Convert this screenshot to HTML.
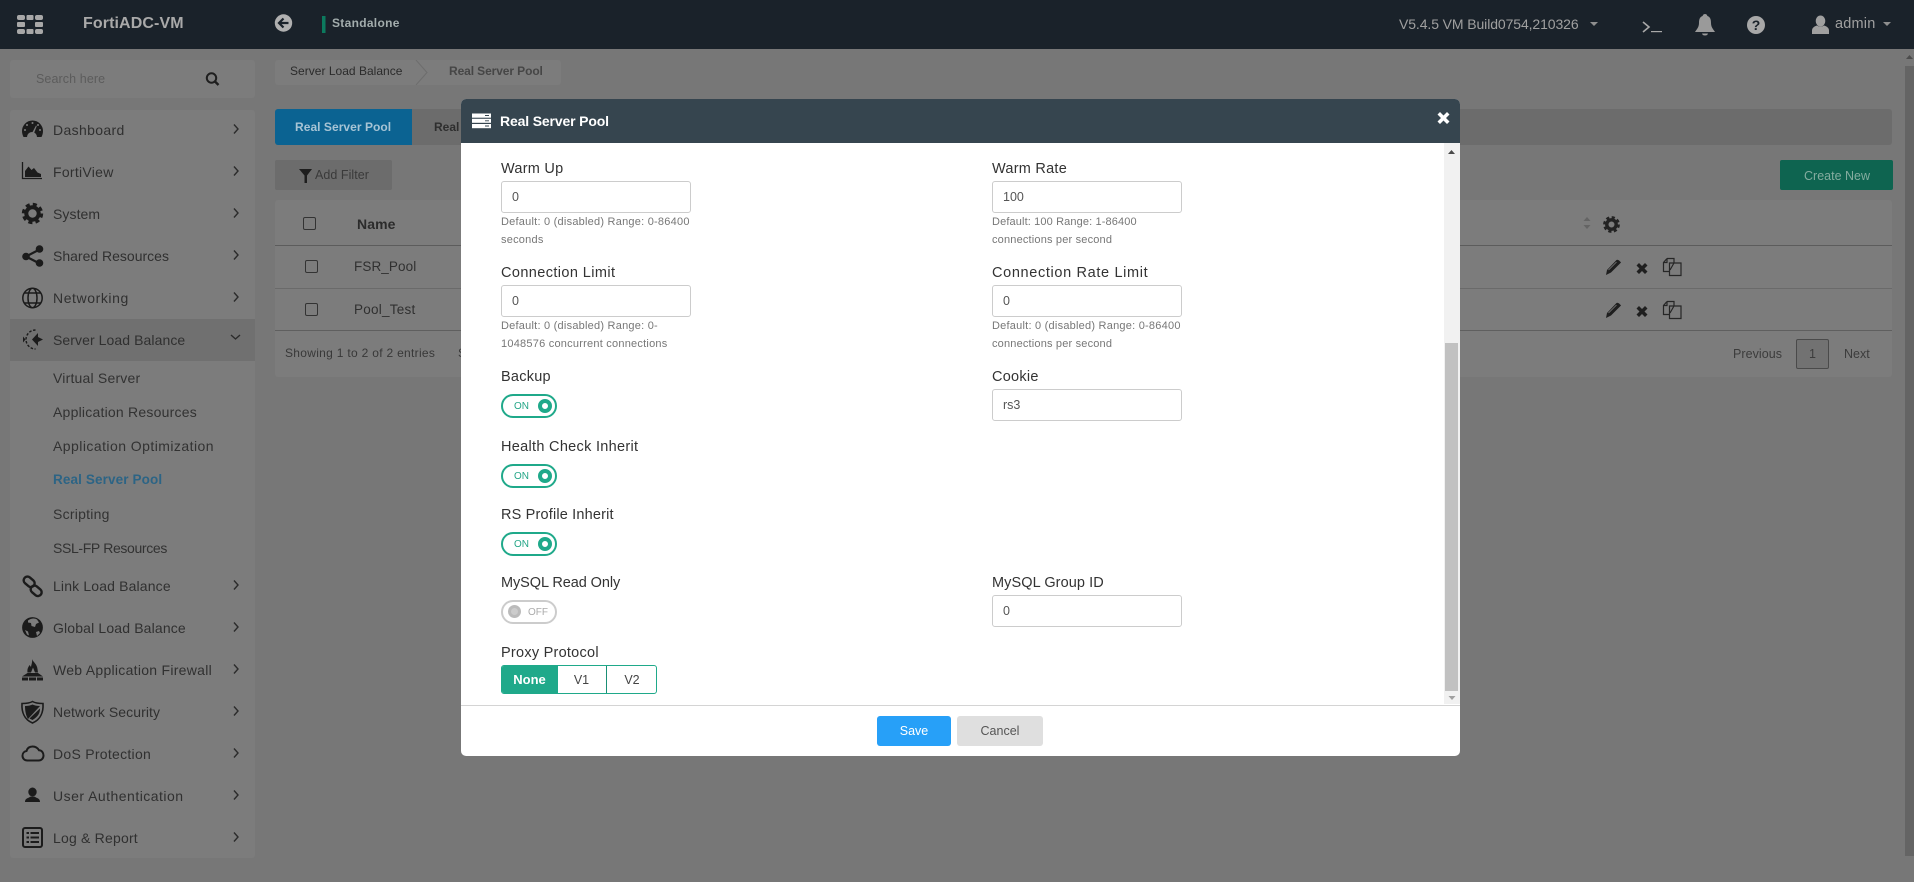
<!DOCTYPE html>
<html lang="en"><head><meta charset="utf-8"><title>FortiADC-VM</title>
<style>
*{box-sizing:border-box}
html,body{margin:0;padding:0;width:1914px;height:882px;overflow:hidden;background:#777;font-family:"Liberation Sans",Arial,sans-serif;color:#2d2d2d}
.a,.t{position:absolute}
.t{line-height:20px;height:20px;white-space:nowrap}
.s{font-size:14px;letter-spacing:.08px;color:#303030;left:53px}
.sub{font-size:14px;letter-spacing:.1px;color:#323232;left:53px}
.p{background:#7c7c7c;border-radius:3px}
.lab{font-size:14.5px;letter-spacing:.25px;color:#333}
.hlp{font-size:11px;letter-spacing:.23px;color:#777;line-height:17px;height:17px}
.inp{position:absolute;width:190px;height:32px;border:1px solid #ccc;border-radius:3px;background:#fff;font-size:12.5px;color:#555;line-height:30px;padding-left:10px}
.tg{position:absolute;left:501px;width:56px;height:24px;border:2px solid #1fa98a;border-radius:12px;background:#fff}
.tg b{position:absolute;left:11px;top:3px;font-weight:normal;font-size:10px;line-height:16px;color:#23a586}
.tg i{position:absolute;left:35px;top:3px;width:14px;height:14px;border-radius:50%;border:4.5px solid #1fa98a;background:#fff}
.tg.off{border-color:#ccc}
.tg.off b{left:25px;color:#aaa}
.tg.off i{left:5px;border:3px solid #bbb;background:#ccc;width:13px;height:13px}
</style></head><body>

<!-- header -->
<div class="a" style="left:0;top:0;width:1914px;height:49px;background:#1a222a"></div>
<svg class="a" style="left:0;top:0" width="1914" height="49" fill="#a8a8a8">
  <rect x="17" y="15" width="8" height="5" rx="2"/><rect x="26.5" y="15" width="7" height="5" rx="1"/><rect x="35" y="15" width="8" height="5" rx="2"/>
  <rect x="17" y="22" width="8" height="5" rx="1"/><rect x="35" y="22" width="8" height="5" rx="1"/>
  <rect x="17" y="29" width="8" height="5" rx="2"/><rect x="26.5" y="29" width="7" height="5" rx="1"/><rect x="35" y="29" width="8" height="5" rx="2"/>
  <circle cx="283.5" cy="23" r="8.7" fill="#b0b0b0"/>
  <path d="M288.5 23h-8M283.5 18.5l-4.5 4.500 4.500 4.500" fill="none" stroke="#1a222a" stroke-width="2.200"/>
  <rect x="322" y="16" width="3.500" height="17" fill="#0c7a5e"/>
  <path d="M1590 22h8l-4 4zM1883 22h8l-4 4z" fill="#8f8f8f"/>
  <path d="M1643 22l6 5-6 5" fill="none" stroke="#a8a8a8" stroke-width="1.600"/><rect x="1651" y="31" width="11" height="1.200" fill="#a8a8a8"/>
  <path d="M1705 14c2 0 2 1.500 2.500 2 3 1 3.500 4 3.500 7 0 4 2 6 4 9h-20c2-3 4-5 4-9 0-3 .5-6 3.500-7 .5-.5.5-2 2.500-2zM1702 33.500h6c-.5 1.500-1.500 2-3 2s-2.500-.5-3-2z" fill="#9a9a9a"/>
  <circle cx="1756" cy="25" r="9" fill="#a8a8a8"/>
  <text x="1756" y="30" font-family="Liberation Sans" font-weight="bold" font-size="14" text-anchor="middle" fill="#1a222a">?</text>
  <ellipse cx="1820.500" cy="21" rx="4.800" ry="5.500" fill="#a0a0a0"/>
  <path d="M1812 34v-3.500c0-3 3-4.500 5-5 2 1.500 5 1.500 7 0 2 .5 5 2 5 5V34z" fill="#a0a0a0"/>
</svg>
<div class="t" style="left:83px;top:14px;font-size:16px;font-weight:bold;color:#a9a9a9;letter-spacing:.1px">FortiADC-VM</div>
<div class="t" style="left:332px;top:13px;font-size:12px;font-weight:bold;color:#a3adad;letter-spacing:.3px">Standalone</div>
<div class="t" style="left:1399px;top:14px;font-size:14px;color:#a0a0a0;letter-spacing:-.1px">V5.4.5 VM Build0754,210326</div>
<div class="t" style="left:1835px;top:14px;font-size:14.500px;color:#a0a0a0;letter-spacing:.2px">admin</div>

<!-- search -->
<div class="a p" style="left:10px;top:60px;width:245px;height:38px"></div>
<div class="t" style="left:36px;top:69px;font-size:12.500px;color:#5c5c5c;letter-spacing:.1px">Search here</div>
<svg class="a" style="left:200px;top:68px" width="24" height="24" fill="none" stroke="#1e1e1e"><circle cx="11.500" cy="10" r="4.700" stroke-width="2"/><path d="M15 13.500l3.500 3.500" stroke-width="2.400"/></svg>

<!-- sidebar -->
<div class="a p" style="left:10px;top:110px;width:245px;height:748px"></div>
<div class="a" style="left:10px;top:319px;width:245px;height:42px;background:#707070"></div>
<div class="t s" style="top:120px;letter-spacing:.35px">Dashboard</div>
<div class="t s" style="top:162px;letter-spacing:.28px">FortiView</div>
<div class="t s" style="top:204px">System</div>
<div class="t s" style="top:246px;letter-spacing:0">Shared Resources</div>
<div class="t s" style="top:288px;letter-spacing:.58px">Networking</div>
<div class="t s" style="top:330px">Server Load Balance</div>
<div class="t sub" style="top:368px;letter-spacing:.2px">Virtual Server</div>
<div class="t sub" style="top:402px;letter-spacing:.22px">Application Resources</div>
<div class="t sub" style="top:436px;letter-spacing:.45px">Application Optimization</div>
<div class="t sub" style="top:470px;color:#2c6485;font-weight:bold;font-size:13.500px;letter-spacing:.12px">Real Server Pool</div>
<div class="t sub" style="top:504px;letter-spacing:.25px">Scripting</div>
<div class="t sub" style="top:538px;letter-spacing:-.35px">SSL-FP Resources</div>
<div class="t s" style="top:576px;letter-spacing:.15px">Link Load Balance</div>
<div class="t s" style="top:618px;letter-spacing:.15px">Global Load Balance</div>
<div class="t s" style="top:660px;letter-spacing:.28px">Web Application Firewall</div>
<div class="t s" style="top:702px">Network Security</div>
<div class="t s" style="top:744px;letter-spacing:.28px">DoS Protection</div>
<div class="t s" style="top:786px;letter-spacing:.48px">User Authentication</div>
<div class="t s" style="top:828px;letter-spacing:.2px">Log &amp; Report</div>

<svg class="a" style="left:0;top:0" width="270" height="882">
  <g fill="none" stroke="#2b2b2b" stroke-width="1.400">
    <path d="M234 124.500l4 4.500-4 4.500M234 166.500l4 4.500-4 4.500M234 208.500l4 4.500-4 4.500M234 250.500l4 4.500-4 4.500M234 292.500l4 4.500-4 4.500M231 335l4.500 4 4.500-4M234 580.500l4 4.500-4 4.500M234 622.500l4 4.500-4 4.500M234 664.500l4 4.500-4 4.500M234 706.500l4 4.500-4 4.500M234 748.500l4 4.500-4 4.500M234 790.500l4 4.500-4 4.500M234 832.500l4 4.500-4 4.500"/>
  </g>
  <g fill="#1b1b1b">
    <!-- dashboard -->
    <path d="M22 131a10.500 10.500 0 0 1 21 0c0 2-.5 4-1.500 6H37a5 5 0 0 0-10 0h-3.500c-1-2-1.500-4-1.500-6z"/>
    <g fill="#7c7c7c"><circle cx="32.500" cy="123" r="1"/><circle cx="27" cy="125" r="1"/><circle cx="38" cy="125" r="1"/><circle cx="25" cy="130" r="1"/><circle cx="40" cy="130" r="1"/></g>
    <path d="M31.500 134l4.500-8.500 .8.500-3.500 9z" fill="#7c7c7c"/>
    <!-- fortiview -->
    <path d="M22.500 162v16.500h19.500" fill="none" stroke="#1b1b1b" stroke-width="1.300"/>
    <path d="M25 177v-6l3.500-4.500 3 3.500 2.500-2 3.500 4.500 3.500 1.500v3z"/>
    <!-- system -->
    <circle cx="32.500" cy="213.500" r="6.200" fill="none" stroke="#1b1b1b" stroke-width="4"/>
    <circle cx="32.500" cy="213.500" r="9" fill="none" stroke="#1b1b1b" stroke-width="3.400" stroke-dasharray="4 3.070"/>
    <!-- shared -->
    <path d="M39.500 249.500L26 256.500l13.500 7" fill="none" stroke="#1b1b1b" stroke-width="2.200"/>
    <circle cx="39.500" cy="249" r="3.800"/><circle cx="26" cy="256.500" r="3.800"/><circle cx="39.500" cy="263" r="3.800"/>
    <!-- networking -->
    <g fill="none" stroke="#1b1b1b" stroke-width="1.500"><circle cx="32.500" cy="298" r="9.700"/><ellipse cx="32.500" cy="298" rx="4.500" ry="9.700"/><path d="M24 293h17M24 303h17"/></g>
    <!-- slb -->
    <path d="M32 339.500L38 333v4l5 2.500-5 2.500v4z"/>
    <path d="M23 336.500l2.500 3-2.500 3z"/>
    <path d="M35.500 330a9.500 9.500 0 0 0 0 19" fill="none" stroke="#1b1b1b" stroke-width="1.400" stroke-dasharray="2.500 1.600"/>
    <!-- link -->
    <g fill="none" stroke="#1b1b1b" stroke-width="2.400"><rect x="23" y="578" width="12" height="7.500" rx="3.700" transform="rotate(40 29 582)"/><rect x="30" y="587" width="12" height="7.500" rx="3.700" transform="rotate(40 36 591)"/></g>
    <!-- global -->
    <circle cx="32.500" cy="627.500" r="10.400"/>
    <path d="M28 620.500c3-2.500 7-2.500 9-1l2 3-3 1.500-1 3-3.500-1-.5-3-3-.5zM36 632l3-1 1 2-3 3zM25 630l3 1.500 1 4-2-1z" fill="#7c7c7c"/>
    <!-- waf -->
    <path d="M32 659c1 3 5 5 5.500 10l.5 3.500H27.500c-.5-4 1-5.500 2-7.500l1.500 2c.5-3 1.500-5 1-8z"/>
    <path d="M31 672.500l2-5 2 5z" fill="#7c7c7c"/>
    <path d="M22 676.500l5.500-3.500h10.500l5 3.500z"/>
    <path d="M22 677.500h6v3h-6zM29 677.500h7v3h-7zM37 677.500h6v3h-6z"/>
    <!-- netsec -->
    <path d="M22 703.500c4 0 8-.5 10.500-2 2.500 1.500 6.500 2 10.500 2 .5 8-2 16-10.500 19.500C24 719.500 21.500 711.500 22 703.500z" fill="none" stroke="#1b1b1b" stroke-width="1.600"/>
    <path d="M25 706c3 0 5.500-.5 7.500-1.500 2 1 4.500 1.500 7.500 1.500l-12 13c-2-3-3-8-3-13zM40 708.500c0 4-1.500 8-7.500 11.500l-3-1.500z"/>
    <!-- dos -->
    <path d="M28.500 760.500h-1c-3 0-5-2-5-4.700s1.800-4.500 4-4.800c.8-3 3-4.500 6.200-4.500 3 0 5 1.500 6.300 3.800 2.800 0 4.500 2.500 4.500 5.200s-2 5-5 5z" fill="none" stroke="#1b1b1b" stroke-width="2"/>
    <!-- user -->
    <ellipse cx="32.500" cy="792" rx="4.200" ry="4.500"/>
    <path d="M25 802c0-2.500 1.500-3.500 3.500-4.200l2-1.200h4l2 1.200c2 .7 3.500 1.700 3.500 4.200z"/>
    <!-- log -->
    <rect x="23" y="828" width="19" height="19" rx="2" fill="none" stroke="#1b1b1b" stroke-width="2"/>
    <path d="M26.500 832h2.500v2h-2.500zM30.500 832H39v2h-8.500zM26.500 836.500h2.500v2h-2.500zM30.500 836.500H39v2h-8.500zM26.500 841h2.500v2h-2.500zM30.500 841H39v2h-8.500z"/>
  </g>
</svg>

<!-- breadcrumb -->
<div class="a p" style="left:275px;top:60px;width:286px;height:25px"></div>
<svg class="a" style="left:410px;top:60px" width="22" height="25" fill="none" stroke="#6d6d6d"><path d="M6 0l11 12.500L6 25"/></svg>
<div class="t" style="left:290px;top:61px;font-size:12px;letter-spacing:.02px;color:#2b2b2b">Server Load Balance</div>
<div class="t" style="left:449px;top:61px;font-size:12px;font-weight:bold;color:#464646;letter-spacing:-.1px">Real Server Pool</div>

<!-- tabs -->
<div class="a" style="left:275px;top:109px;width:1617px;height:36px;background:#6c6c6c;border-radius:3px"></div>
<div class="a" style="left:275px;top:109px;width:137px;height:36px;background:#0b6392;border-radius:3px 0 0 3px"></div>
<div class="t" style="left:295px;top:117px;font-size:12px;font-weight:bold;color:#a7c4d5;letter-spacing:.05px">Real Server Pool</div>
<div class="t" style="left:434px;top:117px;font-size:12px;font-weight:bold;color:#2e2e2e">Real</div>

<!-- filter / create -->
<div class="a" style="left:275px;top:160px;width:117px;height:30px;background:#6c6c6c;border-radius:2px"></div>
<svg class="a" style="left:299px;top:169px" width="14" height="14"><path d="M0 0h13L8 6.500V14H5.500V6.500z" fill="#1e1e1e"/></svg>
<div class="t" style="left:315px;top:165px;font-size:12.500px;color:#3a3a3a;letter-spacing:.05px">Add Filter</div>
<div class="a" style="left:1780px;top:160px;width:113px;height:30px;background:#0e6450;border-radius:2px"></div>
<div class="t" style="left:1804px;top:166px;font-size:12.500px;color:#84ac9f">Create New</div>

<!-- table -->
<div class="a p" style="left:275px;top:200px;width:1617px;height:177px"></div>
<div class="a" style="left:275px;top:245px;width:1617px;height:1px;background:#5c5c5c"></div>
<div class="a" style="left:275px;top:288px;width:1617px;height:1px;background:#6a6a6a"></div>
<div class="a" style="left:275px;top:330px;width:1617px;height:1px;background:#5f5f5f"></div>
<div class="a" style="left:303px;top:217px;width:13px;height:13px;border:1px solid #333;border-radius:2px"></div>
<div class="a" style="left:305px;top:260px;width:13px;height:13px;border:1px solid #333;border-radius:2px"></div>
<div class="a" style="left:305px;top:303px;width:13px;height:13px;border:1px solid #333;border-radius:2px"></div>
<div class="t" style="left:357px;top:214px;font-size:14px;font-weight:bold;color:#2b2b2b;letter-spacing:.1px">Name</div>
<div class="t" style="left:354px;top:257px;font-size:13.500px;color:#303030;letter-spacing:.1px">FSR_Pool</div>
<div class="t" style="left:354px;top:300px;font-size:13.500px;color:#303030;letter-spacing:.25px">Pool_Test</div>
<div class="t" style="left:285px;top:343px;font-size:12px;color:#383838;letter-spacing:.3px">Showing 1 to 2 of 2 entries</div>
<div class="t" style="left:458px;top:343px;font-size:12px;color:#383838">Show</div>
<div class="t" style="left:1733px;top:344px;font-size:12.500px;color:#3c3c3c;letter-spacing:.05px">Previous</div>
<div class="a" style="left:1796px;top:339px;width:33px;height:30px;background:#727272;border:1px solid #4a4a4a;border-radius:2px"></div>
<div class="t" style="left:1809px;top:344px;font-size:12.500px;color:#3c3c3c">1</div>
<div class="t" style="left:1844px;top:344px;font-size:12.500px;color:#3c3c3c">Next</div>
<svg class="a" style="left:0;top:0" width="1914" height="882">
  <path d="M1587 217l3.500 4h-7zM1587 229l3.500-4h-7z" fill="#646464"/>
  <circle cx="1611.500" cy="224.500" r="4.700" fill="none" stroke="#232323" stroke-width="3.400"/>
  <circle cx="1611.500" cy="224.500" r="7.200" fill="none" stroke="#232323" stroke-width="2.400" stroke-dasharray="3.200 2.450"/>
  <g>
    <path d="M1606 275l1-5 9.500-10c1-1 3.500 1 4.500 2.500l-10 10z" fill="#1f1f1f"/><path d="M1608.500 270l8-8" stroke="#7c7c7c" stroke-width=".8"/>
    <path d="M1636.500 265.500l2.500-2.500 3 3 3-3 2.500 2.500-3 3 3 3-2.500 2.500-3-3-3 3-2.500-2.500 3-3z" fill="#1f1f1f"/>
    <path d="M1667 258.500h7v4.500M1667 258.500l-3.500 4v9h5.500M1667 258.500v4h-3.500M1669.500 263h11.500v12.500h-11.500zM1670 270l4-7" fill="none" stroke="#262626" stroke-width="1.200"/>
  </g>
  <g transform="translate(0,43)">
    <path d="M1606 275l1-5 9.500-10c1-1 3.500 1 4.500 2.500l-10 10z" fill="#1f1f1f"/><path d="M1608.500 270l8-8" stroke="#7c7c7c" stroke-width=".8"/>
    <path d="M1636.500 265.500l2.500-2.500 3 3 3-3 2.500 2.500-3 3 3 3-2.500 2.500-3-3-3 3-2.500-2.500 3-3z" fill="#1f1f1f"/>
    <path d="M1667 258.500h7v4.500M1667 258.500l-3.500 4v9h5.500M1667 258.500v4h-3.500M1669.500 263h11.500v12.500h-11.500zM1670 270l4-7" fill="none" stroke="#262626" stroke-width="1.200"/>
  </g>
  <!-- page scrollbar -->
  <rect x="1905" y="66" width="9" height="790" fill="#646464"/>
  <path d="M1909.500 55l3.500 4h-7z" fill="#4c4c4c"/>
</svg>

<!-- modal -->
<div class="a" style="left:461px;top:99px;width:999px;height:657px;background:#fff;border-radius:5px;overflow:hidden">
  <div class="a" style="left:0;top:0;width:999px;height:44px;background:#36454f"></div>
  <div class="a" style="left:983px;top:44px;width:16px;height:561px;background:#f1f1f1"></div>
  <div class="a" style="left:984px;top:244px;width:13px;height:348px;background:#c1c1c1"></div>
  <div class="a" style="left:0;top:606px;width:999px;height:1px;background:#d4d4d4"></div>
</div>
<svg class="a" style="left:0;top:0" width="1914" height="882">
  <path d="M1451.500 150l3.500 4h-7z" fill="#4a4a4a"/>
  <path d="M1452 700l3.500-4h-7z" fill="#a0a0a0"/>
  <path d="M1437.500 114.500l2.500-2.500 3.500 3.500 3.500-3.500 2.500 2.500-3.500 3.500 3.500 3.500-2.500 2.500-3.500-3.500-3.500 3.500-2.500-2.500 3.500-3.500z" fill="#fff"/>
  <g fill="#fff"><rect x="472" y="113.500" width="19" height="4.200"/><rect x="472" y="118.800" width="19" height="4"/><rect x="472" y="124" width="19" height="4.200"/></g>
  <path d="M485 115.500h4M485 120.800h4M485 126h4" stroke="#36454f" stroke-width=".9"/>
</svg>
<div class="t" style="left:500px;top:111px;font-size:14px;font-weight:bold;color:#fff;letter-spacing:-.15px">Real Server Pool</div>

<div class="t lab" style="left:501px;top:159px">Warm Up</div>
<div class="inp" style="left:501px;top:181px">0</div>
<div class="t hlp" style="left:501px;top:214px">Default: 0 (disabled) Range: 0-86400</div>
<div class="t hlp" style="left:501px;top:232px">seconds</div>
<div class="t lab" style="left:501px;top:263px;letter-spacing:.4px">Connection Limit</div>
<div class="inp" style="left:501px;top:285px">0</div>
<div class="t hlp" style="left:501px;top:318px">Default: 0 (disabled) Range: 0-</div>
<div class="t hlp" style="left:501px;top:336px">1048576 concurrent connections</div>
<div class="t lab" style="left:501px;top:367px">Backup</div>
<div class="tg" style="top:394px"><b>ON</b><i></i></div>
<div class="t lab" style="left:501px;top:437px;letter-spacing:.3px">Health Check Inherit</div>
<div class="tg" style="top:464px"><b>ON</b><i></i></div>
<div class="t lab" style="left:501px;top:505px;letter-spacing:.17px">RS Profile Inherit</div>
<div class="tg" style="top:532px"><b>ON</b><i></i></div>
<div class="t lab" style="left:501px;top:573px;letter-spacing:-.08px">MySQL Read Only</div>
<div class="tg off" style="top:600px"><b>OFF</b><i></i></div>
<div class="t lab" style="left:501px;top:643px">Proxy Protocol</div>
<div class="a" style="left:501px;top:665px;width:156px;height:29px;border:1px solid #1fa98a;border-radius:3px;background:#fff;overflow:hidden">
  <div class="a" style="left:-1px;top:-1px;width:57px;height:29px;background:#1fa98a;color:#fff;font-size:13px;font-weight:bold;text-align:center;line-height:30px">None</div>
  <div class="a" style="left:55px;top:0;width:50px;height:27px;border-right:1px solid #1a8f75;color:#444;font-size:12.500px;text-align:center;line-height:28px">V1</div>
  <div class="a" style="left:105px;top:0;width:50px;height:27px;color:#444;font-size:12.500px;text-align:center;line-height:28px">V2</div>
</div>

<div class="t lab" style="left:992px;top:159px">Warm Rate</div>
<div class="inp" style="left:992px;top:181px">100</div>
<div class="t hlp" style="left:992px;top:214px;letter-spacing:.13px">Default: 100 Range: 1-86400</div>
<div class="t hlp" style="left:992px;top:232px;letter-spacing:.18px">connections per second</div>
<div class="t lab" style="left:992px;top:263px;letter-spacing:.65px">Connection Rate Limit</div>
<div class="inp" style="left:992px;top:285px">0</div>
<div class="t hlp" style="left:992px;top:318px">Default: 0 (disabled) Range: 0-86400</div>
<div class="t hlp" style="left:992px;top:336px;letter-spacing:.18px">connections per second</div>
<div class="t lab" style="left:992px;top:367px">Cookie</div>
<div class="inp" style="left:992px;top:389px">rs3</div>
<div class="t lab" style="left:992px;top:573px;letter-spacing:.08px">MySQL Group ID</div>
<div class="inp" style="left:992px;top:595px">0</div>

<div class="a" style="left:877px;top:716px;width:74px;height:30px;background:#27a0f8;border-radius:3px;color:#fff;font-size:12.500px;text-align:center;line-height:30px">Save</div>
<div class="a" style="left:957px;top:716px;width:86px;height:30px;background:#dfdfdf;border-radius:3px;color:#555;font-size:12.500px;text-align:center;line-height:30px">Cancel</div>

</body></html>
